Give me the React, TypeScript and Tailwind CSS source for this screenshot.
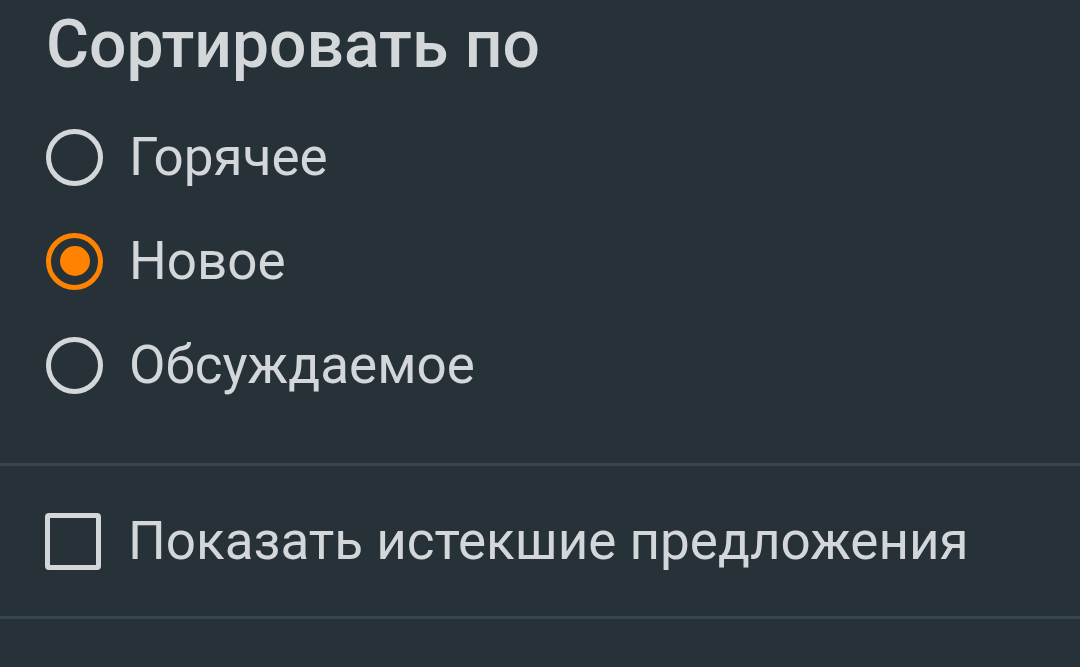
import { useState } from "react";

const options = ["Горячее", "Новое", "Обсуждаемое"];

export default function App() {
  const [sort, setSort] = useState("Новое");
  const [showExpired, setShowExpired] = useState(false);

  return (
    <div className="min-h-screen w-full bg-[#263238] text-[#d3d7d9] font-['Roboto',sans-serif]">
      <div className="flex h-[105px] items-start pl-[46px]">
        <h2 className="mt-[5px] text-[66px] font-medium leading-[80px]">Сортировать по</h2>
      </div>

      <div className="flex flex-col pb-[46px]">
        {options.map((opt) => {
          const active = opt === sort;
          return (
            <button
              key={opt}
              onClick={() => setSort(opt)}
              className="flex h-[104px] items-center gap-[26px] pl-[46px] text-left"
            >
              <span
                className={
                  active
                    ? "flex h-[57px] w-[57px] items-center justify-center rounded-full border-[5px] border-[#ff8200]"
                    : "flex h-[57px] w-[57px] items-center justify-center rounded-full border-[5px] border-[#d3d7d9]"
                }
              >
                {active && <span className="h-[30px] w-[30px] rounded-full bg-[#ff8200]" />}
              </span>
              <span className="text-[53px] leading-none">{opt}</span>
            </button>
          );
        })}
      </div>

      <div className="h-[3px] bg-[#37444b]" />

      <button
        onClick={() => setShowExpired(!showExpired)}
        className="flex h-[150px] w-full items-center gap-[27px] pl-[45px] text-left"
      >
        <span className="flex h-[57px] w-[56px] items-center justify-center rounded-[4px] border-[5px] border-[#d3d7d9]">
          {showExpired && <span className="h-[28px] w-[28px] bg-[#d3d7d9]" />}
        </span>
        <span className="text-[53px] leading-none">Показать истекшие предложения</span>
      </button>

      <div className="h-[3px] bg-[#37444b]" />
    </div>
  );
}
